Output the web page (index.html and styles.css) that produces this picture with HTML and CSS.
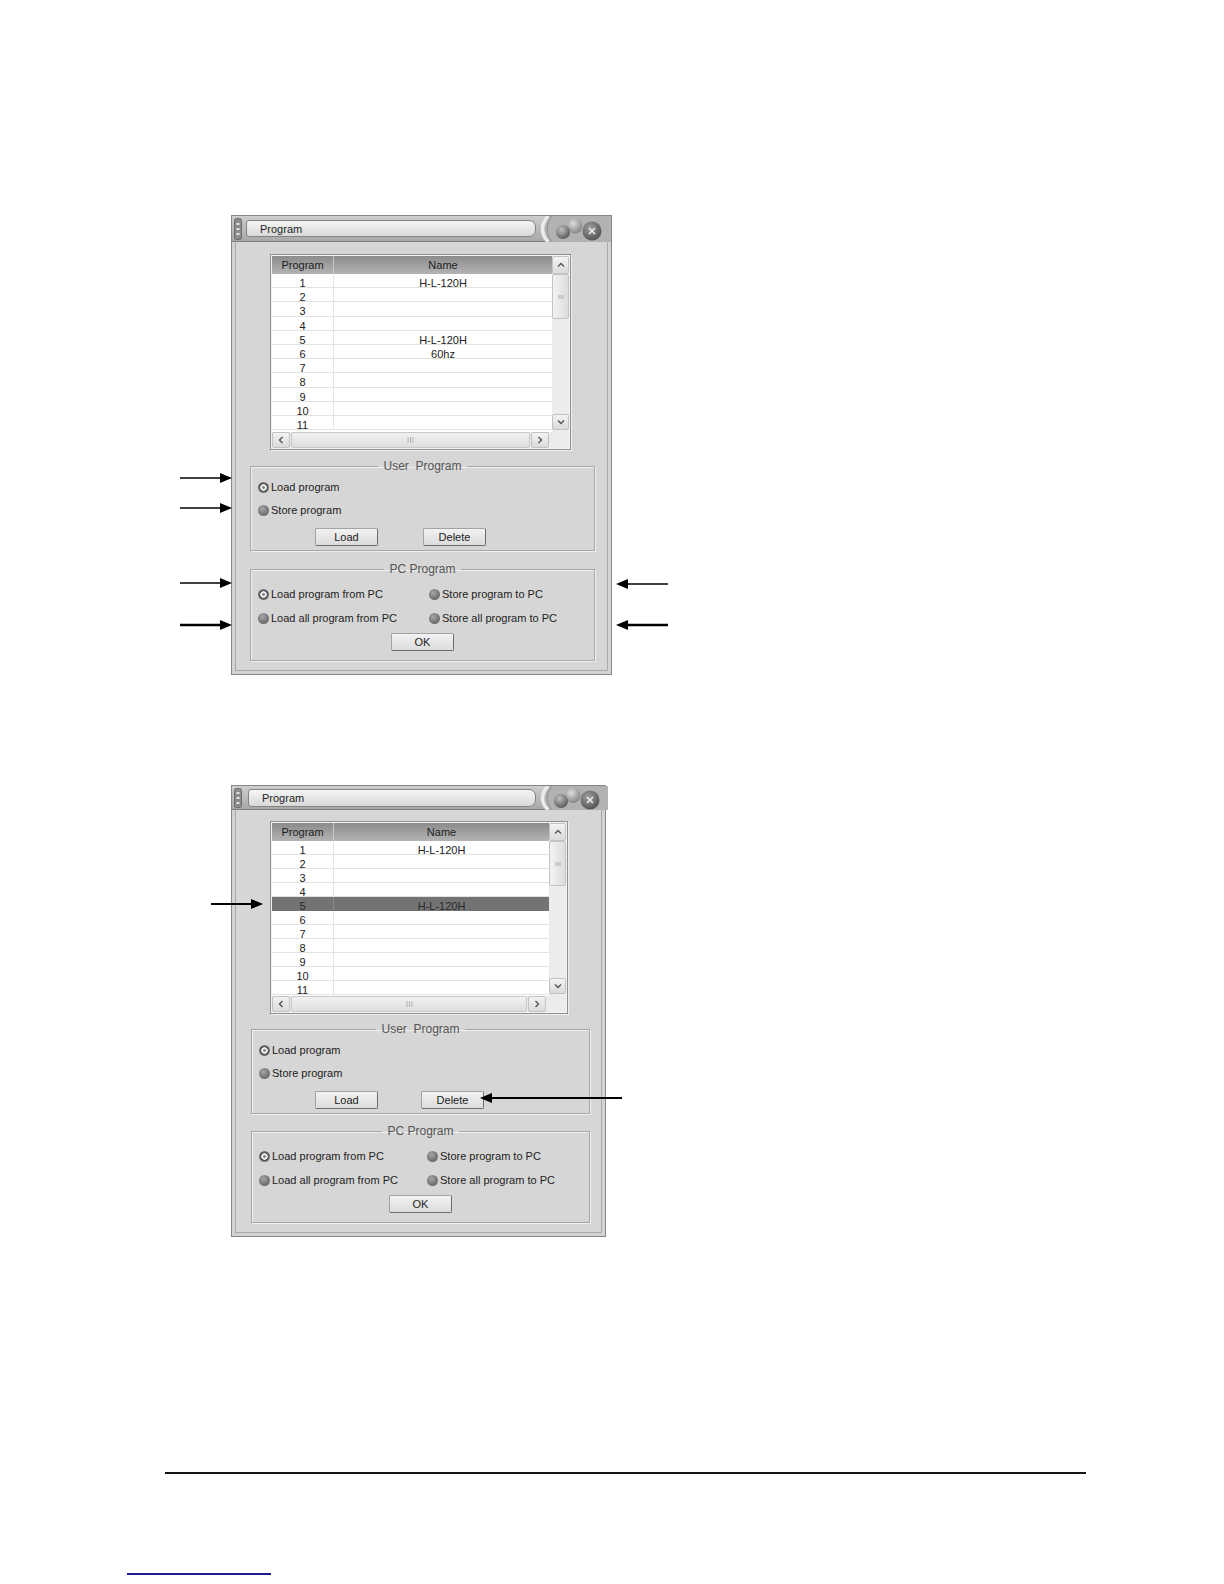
FILE: index.html
```html
<!DOCTYPE html>
<html>
<head>
<meta charset="utf-8">
<title>Program</title>
<link rel="stylesheet" href="styles.css">
</head>
<body>
<div class="page">

  <div class="figure fig-a">
    <div class="window win-a">
      <div class="titlebar">
        <svg class="grip" width="8" height="22" viewBox="0 0 8 22"><rect x="0.5" y="0.5" width="7" height="21" rx="2" fill="#8c8c8c" stroke="#6d6d6d"/><rect x="2.5" y="5" width="3" height="2" fill="#e4e4e4"/><rect x="2.5" y="10" width="3" height="2" fill="#e4e4e4"/><rect x="2.5" y="15" width="3" height="2" fill="#e4e4e4"/></svg>
        <div class="title-field">Program</div>
        <svg class="tbtns" width="75" height="26" viewBox="0 0 75 26">
          <defs>
            <radialGradient id="ga1" cx="38%" cy="32%" r="70%"><stop offset="0" stop-color="#c0c0c0"/><stop offset="1" stop-color="#5a5a5a"/></radialGradient>
            <radialGradient id="ga2" cx="38%" cy="32%" r="70%"><stop offset="0" stop-color="#dcdcdc"/><stop offset="1" stop-color="#858585"/></radialGradient>
            <radialGradient id="ga3" cx="40%" cy="35%" r="70%"><stop offset="0" stop-color="#a0a0a0"/><stop offset="1" stop-color="#505050"/></radialGradient>
          </defs>
          <path d="M13 0 Q1 13 13 26 L75 26 L75 0 Z" fill="#b2b2b2"/>
          <path d="M12 0 Q1 13 12 26" fill="none" stroke="#ececec" stroke-width="3.5"/>
          <path d="M16 0 Q6 13 16 26" fill="none" stroke="#8f8f8f" stroke-width="1"/>
          <circle cx="39" cy="10" r="7.5" fill="url(#ga2)"/>
          <circle cx="27" cy="16" r="7" fill="url(#ga1)"/>
          <circle cx="56" cy="15" r="9.5" fill="url(#ga3)"/>
          <path d="M53 12 L59 18 M59 12 L53 18" stroke="#efefef" stroke-width="1.5"/>
        </svg>
      </div>
      <div class="win-body">
        <div class="listview">
          <div class="lv-main">
            <div class="lv-head"><div class="c1">Program</div><div class="c2">Name</div></div>
            <div class="lv-rows">
              <div class="row"><div class="c1">1</div><div class="c2">H-L-120H</div></div>
              <div class="row"><div class="c1">2</div><div class="c2"></div></div>
              <div class="row"><div class="c1">3</div><div class="c2"></div></div>
              <div class="row"><div class="c1">4</div><div class="c2"></div></div>
              <div class="row"><div class="c1">5</div><div class="c2">H-L-120H</div></div>
              <div class="row"><div class="c1">6</div><div class="c2">60hz</div></div>
              <div class="row"><div class="c1">7</div><div class="c2"></div></div>
              <div class="row"><div class="c1">8</div><div class="c2"></div></div>
              <div class="row"><div class="c1">9</div><div class="c2"></div></div>
              <div class="row"><div class="c1">10</div><div class="c2"></div></div>
              <div class="row"><div class="c1">11</div><div class="c2"></div></div>
            </div>
            <div class="hscroll">
              <div class="sb-btn"><svg width="6" height="8" viewBox="0 0 6 8"><polyline points="4.5,1 1.5,4 4.5,7" fill="none" stroke="#555" stroke-width="1.4"/></svg></div>
              <div class="h-thumb"><svg width="7" height="6" viewBox="0 0 7 6"><path d="M1 0V6M3.5 0V6M6 0V6" stroke="#b0b0b0" stroke-width="1"/></svg></div>
              <div class="sb-btn"><svg width="6" height="8" viewBox="0 0 6 8"><polyline points="1.5,1 4.5,4 1.5,7" fill="none" stroke="#555" stroke-width="1.4"/></svg></div>
            </div>
          </div>
          <div class="vscroll">
            <div class="sb-btn v-up"><svg width="8" height="6" viewBox="0 0 8 6"><polyline points="1,4.5 4,1.5 7,4.5" fill="none" stroke="#555" stroke-width="1.4"/></svg></div>
            <div class="v-thumb"><svg width="6" height="4" viewBox="0 0 6 4"><path d="M0 1H6M0 3H6" stroke="#b0b0b0" stroke-width="1"/></svg></div>
            <div class="v-track"></div>
            <div class="sb-btn v-down"><svg width="8" height="6" viewBox="0 0 8 6"><polyline points="1,1.5 4,4.5 7,1.5" fill="none" stroke="#555" stroke-width="1.4"/></svg></div>
            <div class="v-corner"></div>
          </div>
        </div>

        <fieldset class="group user-group">
          <legend>User&nbsp; Program</legend>
          <div class="radio"><span class="ball on"></span>Load program</div>
          <div class="radio"><span class="ball"></span>Store program</div>
          <div class="btn-row">
            <button class="btn">Load</button>
            <button class="btn">Delete</button>
          </div>
        </fieldset>

        <fieldset class="group pc-group">
          <legend>PC Program</legend>
          <div class="pc-grid">
            <div class="radio"><span class="ball on"></span>Load program from PC</div>
            <div class="radio"><span class="ball"></span>Store program to PC</div>
            <div class="radio"><span class="ball"></span>Load all program from PC</div>
            <div class="radio"><span class="ball"></span>Store all program to PC</div>
          </div>
          <div class="ok-row"><button class="btn">OK</button></div>
        </fieldset>
      </div>
    </div>

    <svg class="arrow a1" width="52" height="12" viewBox="0 0 52 12"><line x1="0" y1="6" x2="42" y2="6" stroke="#000" stroke-width="1.4"/><polygon points="40,1 52,6 40,11" fill="#000"/></svg>
    <svg class="arrow a2" width="52" height="12" viewBox="0 0 52 12"><line x1="0" y1="6" x2="42" y2="6" stroke="#000" stroke-width="1.4"/><polygon points="40,1 52,6 40,11" fill="#000"/></svg>
    <svg class="arrow a3" width="52" height="12" viewBox="0 0 52 12"><line x1="0" y1="6" x2="42" y2="6" stroke="#000" stroke-width="1.4"/><polygon points="40,1 52,6 40,11" fill="#000"/></svg>
    <svg class="arrow a4" width="52" height="12" viewBox="0 0 52 12"><line x1="0" y1="6" x2="42" y2="6" stroke="#000" stroke-width="2.4"/><polygon points="40,1 52,6 40,11" fill="#000"/></svg>
    <svg class="arrow r1" width="52" height="12" viewBox="0 0 52 12"><line x1="10" y1="6" x2="52" y2="6" stroke="#000" stroke-width="1.5"/><polygon points="0,6 12,1 12,11" fill="#000"/></svg>
    <svg class="arrow r2" width="52" height="12" viewBox="0 0 52 12"><line x1="10" y1="6" x2="52" y2="6" stroke="#000" stroke-width="2.5"/><polygon points="0,6 12,1 12,11" fill="#000"/></svg>
  </div>

  <div class="figure fig-b">
    <div class="window win-b">
      <div class="titlebar">
        <svg class="grip" width="8" height="20" viewBox="0 0 8 20"><rect x="0.5" y="0.5" width="7" height="19" rx="2" fill="#8c8c8c" stroke="#6d6d6d"/><rect x="2.5" y="4" width="3" height="2" fill="#e4e4e4"/><rect x="2.5" y="9" width="3" height="2" fill="#e4e4e4"/><rect x="2.5" y="14" width="3" height="2" fill="#e4e4e4"/></svg>
        <div class="title-field">Program</div>
        <svg class="tbtns" width="72" height="24" viewBox="0 0 72 24">
          <defs>
            <radialGradient id="gb1" cx="38%" cy="32%" r="70%"><stop offset="0" stop-color="#c0c0c0"/><stop offset="1" stop-color="#5a5a5a"/></radialGradient>
            <radialGradient id="gb2" cx="38%" cy="32%" r="70%"><stop offset="0" stop-color="#dcdcdc"/><stop offset="1" stop-color="#858585"/></radialGradient>
            <radialGradient id="gb3" cx="40%" cy="35%" r="70%"><stop offset="0" stop-color="#a0a0a0"/><stop offset="1" stop-color="#505050"/></radialGradient>
          </defs>
          <path d="M13 0 Q1 12 13 24 L72 24 L72 0 Z" fill="#b2b2b2"/>
          <path d="M12 0 Q1 12 12 24" fill="none" stroke="#ececec" stroke-width="3.5"/>
          <path d="M16 0 Q6 12 16 24" fill="none" stroke="#8f8f8f" stroke-width="1"/>
          <circle cx="37" cy="9.5" r="7.5" fill="url(#gb2)"/>
          <circle cx="25" cy="15" r="7" fill="url(#gb1)"/>
          <circle cx="54" cy="14" r="9.5" fill="url(#gb3)"/>
          <path d="M51 11 L57 17 M57 11 L51 17" stroke="#efefef" stroke-width="1.5"/>
        </svg>
      </div>
      <div class="win-body">
        <div class="listview">
          <div class="lv-main">
            <div class="lv-head"><div class="c1">Program</div><div class="c2">Name</div></div>
            <div class="lv-rows">
              <div class="row"><div class="c1">1</div><div class="c2">H-L-120H</div></div>
              <div class="row"><div class="c1">2</div><div class="c2"></div></div>
              <div class="row"><div class="c1">3</div><div class="c2"></div></div>
              <div class="row"><div class="c1">4</div><div class="c2"></div></div>
              <div class="row selected"><div class="c1">5</div><div class="c2">H-L-120H</div></div>
              <div class="row"><div class="c1">6</div><div class="c2"></div></div>
              <div class="row"><div class="c1">7</div><div class="c2"></div></div>
              <div class="row"><div class="c1">8</div><div class="c2"></div></div>
              <div class="row"><div class="c1">9</div><div class="c2"></div></div>
              <div class="row"><div class="c1">10</div><div class="c2"></div></div>
              <div class="row"><div class="c1">11</div><div class="c2"></div></div>
            </div>
            <div class="hscroll">
              <div class="sb-btn"><svg width="6" height="8" viewBox="0 0 6 8"><polyline points="4.5,1 1.5,4 4.5,7" fill="none" stroke="#555" stroke-width="1.4"/></svg></div>
              <div class="h-thumb"><svg width="7" height="6" viewBox="0 0 7 6"><path d="M1 0V6M3.5 0V6M6 0V6" stroke="#b0b0b0" stroke-width="1"/></svg></div>
              <div class="sb-btn"><svg width="6" height="8" viewBox="0 0 6 8"><polyline points="1.5,1 4.5,4 1.5,7" fill="none" stroke="#555" stroke-width="1.4"/></svg></div>
            </div>
          </div>
          <div class="vscroll">
            <div class="sb-btn v-up"><svg width="8" height="6" viewBox="0 0 8 6"><polyline points="1,4.5 4,1.5 7,4.5" fill="none" stroke="#555" stroke-width="1.4"/></svg></div>
            <div class="v-thumb"><svg width="6" height="4" viewBox="0 0 6 4"><path d="M0 1H6M0 3H6" stroke="#b0b0b0" stroke-width="1"/></svg></div>
            <div class="v-track"></div>
            <div class="sb-btn v-down"><svg width="8" height="6" viewBox="0 0 8 6"><polyline points="1,1.5 4,4.5 7,1.5" fill="none" stroke="#555" stroke-width="1.4"/></svg></div>
            <div class="v-corner"></div>
          </div>
        </div>

        <fieldset class="group user-group">
          <legend>User&nbsp; Program</legend>
          <div class="radio"><span class="ball on"></span>Load program</div>
          <div class="radio"><span class="ball"></span>Store program</div>
          <div class="btn-row">
            <button class="btn">Load</button>
            <button class="btn">Delete</button>
          </div>
        </fieldset>

        <fieldset class="group pc-group">
          <legend>PC Program</legend>
          <div class="pc-grid">
            <div class="radio"><span class="ball on"></span>Load program from PC</div>
            <div class="radio"><span class="ball"></span>Store program to PC</div>
            <div class="radio"><span class="ball"></span>Load all program from PC</div>
            <div class="radio"><span class="ball"></span>Store all program to PC</div>
          </div>
          <div class="ok-row"><button class="btn">OK</button></div>
        </fieldset>
      </div>
    </div>

    <svg class="arrow b1" width="52" height="12" viewBox="0 0 52 12"><line x1="0" y1="6" x2="42" y2="6" stroke="#000" stroke-width="2"/><polygon points="40,1 52,6 40,11" fill="#000"/></svg>
    <svg class="arrow b2" width="142" height="12" viewBox="0 0 142 12"><line x1="10" y1="6" x2="142" y2="6" stroke="#000" stroke-width="2"/><polygon points="0,6 12,1 12,11" fill="#000"/></svg>
  </div>

  <div class="footer-rule"></div>
  <div class="footer-link"></div>
</div>
</body>
</html>
```
FILE: styles.css
```css
* { box-sizing: border-box; }

html, body {
  margin: 0;
  padding: 0;
  background: #ffffff;
}

body {
  font-family: "Liberation Sans", Arial, sans-serif;
  font-size: 11px;
  color: #222;
}

.page {
  width: 1224px;
  height: 1584px;
  padding-top: 215px;
  overflow: hidden;
}

/* ---------- figures ---------- */
.figure {
  position: relative;
  margin-left: 231px;
}
.fig-a { width: 381px; }
.fig-b { width: 375px; margin-top: 110px; }

/* ---------- window ---------- */
.window {
  width: 100%;
  border: 1px solid #868686;
  background: #d3d3d3;
}

.titlebar {
  display: flex;
  align-items: center;
  height: 26px;
  background: linear-gradient(#cdcdcd, #a9a9a9);
  border-bottom: 1px solid #7e7e7e;
}
.win-b .titlebar { height: 24px; }

.grip {
  display: block;
  margin-left: 2px;
  flex: none;
}

.title-field {
  margin-left: 4px;
  width: 290px;
  height: 17px;
  padding-left: 13px;
  line-height: 16px;
  font-size: 11px;
  color: #1e1e1e;
  background: linear-gradient(#f6f6f6, #d8d8d8);
  border: 1px solid #848484;
  border-radius: 3px 7px 7px 3px;
  flex: none;
}
.win-b .title-field {
  margin-left: 6px;
  width: 288px;
  height: 18px;
  line-height: 17px;
}

.tbtns {
  display: block;
  flex: none;
}

.win-body {
  margin: 0 3px 3px;
  border: 1px solid #a9a9a9;
  border-top: none;
  padding: 12px 0 9px;
  background: #d6d6d6;
}
.win-b .win-body { padding-top: 11px; }

/* ---------- list view ---------- */
.listview {
  display: flex;
  margin-left: 34px;
  width: 301px;
  height: 196px;
  border: 1px solid #8f8f8f;
  padding: 1px;
  background: #f4f4f4;
  box-shadow: 1px 1px 0 #efefef;
  --row: 14.2px;
}
.win-b .listview {
  width: 298px;
  height: 193px;
  --row: 14px;
}

.lv-main {
  flex: 1;
  min-width: 0;
  display: flex;
  flex-direction: column;
}

.lv-head {
  display: flex;
  height: 18px;
  line-height: 18px;
  background: linear-gradient(#8b8b8b, #b3b3b3);
  color: #1e1e1e;
  flex: none;
}
.lv-head .c1 { border-right: 1px solid #c8c8c8; }

.c1 {
  width: 62px;
  flex: none;
  text-align: center;
}
.c2 {
  flex: 1;
  text-align: center;
}

.lv-rows {
  flex: 1;
  overflow: hidden;
  background: #ffffff;
}

.row {
  display: flex;
  height: var(--row);
  border-bottom: 1px solid #e2e2e2;
}
.row .c1, .row .c2 {
  padding-top: 4px;
  line-height: 11px;
  color: #222;
}
.row .c1 { border-right: 1px solid #e4e4e4; }

.row.selected {
  background: #737373;
  border-bottom-color: #737373;
}
.row.selected .c1 { border-right-color: #8a8a8a; }
.row.selected .c1, .row.selected .c2 { color: #2a2a2a; }

.hscroll {
  display: flex;
  height: 16px;
  flex: none;
  background: #ebebeb;
  padding-right: 3px;
}

.sb-btn {
  display: flex;
  align-items: center;
  justify-content: center;
  background: linear-gradient(#f3f3f3, #dadada);
  border: 1px solid #c2c2c2;
  border-radius: 2px;
}
.hscroll .sb-btn { width: 18px; }

.h-thumb {
  flex: 1;
  margin: 0 1px;
  display: flex;
  align-items: center;
  justify-content: center;
  background: linear-gradient(#f1f1f1, #dedede);
  border: 1px solid #c8c8c8;
  border-radius: 2px;
}

.vscroll {
  width: 17px;
  flex: none;
  display: flex;
  flex-direction: column;
  background: #ececec;
}
.v-up { height: 18px; flex: none; }
.v-down { height: 16px; flex: none; }
.v-thumb {
  height: 45px;
  flex: none;
  display: flex;
  align-items: center;
  justify-content: center;
  background: linear-gradient(90deg, #f3f3f3, #dcdcdc);
  border: 1px solid #c2c2c2;
  border-radius: 2px;
}
.v-track { flex: 1; }
.v-corner {
  height: 16px;
  margin-top: 2px;
  flex: none;
  background: #ececec;
}

/* ---------- group boxes ---------- */
.group {
  margin: 0 0 0 14px;
  width: 345px;
  min-width: 0;
  border: 1px solid #a7a7a7;
  box-shadow: inset 1px 1px 0 #efefef, 1px 1px 0 #efefef;
  padding: 6px 7px 4px;
}
.win-b .group {
  margin-left: 15px;
  width: 339px;
}

.group legend {
  margin: 0 auto;
  padding: 0 5px;
  font-size: 12px;
  line-height: 14px;
  color: #555;
}

.user-group { margin-top: 9px; }
.pc-group {
  margin-top: 11px;
  padding-top: 10px;
  padding-bottom: 9px;
}
.win-b .user-group { margin-top: 8px; }
.win-b .pc-group { margin-top: 10px; }

.radio {
  display: flex;
  align-items: center;
  height: 16px;
  white-space: nowrap;
  color: #222;
}
.user-group .radio + .radio { margin-top: 7px; }

.ball {
  width: 11px;
  height: 11px;
  border-radius: 50%;
  margin-right: 2px;
  flex: none;
  background: radial-gradient(circle at 40% 35%, #a8a8a8, #767676 55%, #5e5e5e);
}
.ball.on {
  background: radial-gradient(circle at 50% 50%, #8a8a8a 0 1.2px, #f4f4f4 1.8px 2.9px, #505050 3.6px, #7a7a7a 5.5px);
}

.btn-row {
  display: flex;
  gap: 45px;
  margin-top: 10px;
  padding-left: 57px;
}
.win-b .btn-row {
  gap: 43px;
  padding-left: 56px;
}

.btn {
  width: 63px;
  height: 18px;
  padding: 0;
  margin: 0;
  font-family: "Liberation Sans", Arial, sans-serif;
  font-size: 11px;
  line-height: 16px;
  color: #222;
  text-align: center;
  background: linear-gradient(#f2f2f2, #dcdcdc);
  border: 1px solid #a3a3a3;
  border-right-color: #6c6c6c;
  border-bottom-color: #6c6c6c;
  border-radius: 2px;
}

.pc-grid {
  display: grid;
  grid-template-columns: 171px auto;
  row-gap: 8px;
}
.win-b .pc-grid { grid-template-columns: 168px auto; }

.ok-row {
  display: flex;
  justify-content: center;
  margin-top: 7px;
}

/* ---------- annotation arrows ---------- */
.arrow {
  position: absolute;
  display: block;
}
.a1 { left: -51px; top: 257px; }
.a2 { left: -51px; top: 287px; }
.a3 { left: -51px; top: 362px; }
.a4 { left: -51px; top: 404px; }
.r1 { left: 385px; top: 363px; }
.r2 { left: 385px; top: 404px; }
.b1 { left: -20px; top: 113px; }
.b2 { left: 249px; top: 307px; }

/* ---------- footer ---------- */
.footer-rule {
  margin-top: 235px;
  margin-left: 165px;
  width: 921px;
  height: 2px;
  background: #161616;
}
.footer-link {
  margin-top: 99px;
  margin-left: 127px;
  width: 144px;
  height: 2px;
  background: #1c1c8e;
}
```
